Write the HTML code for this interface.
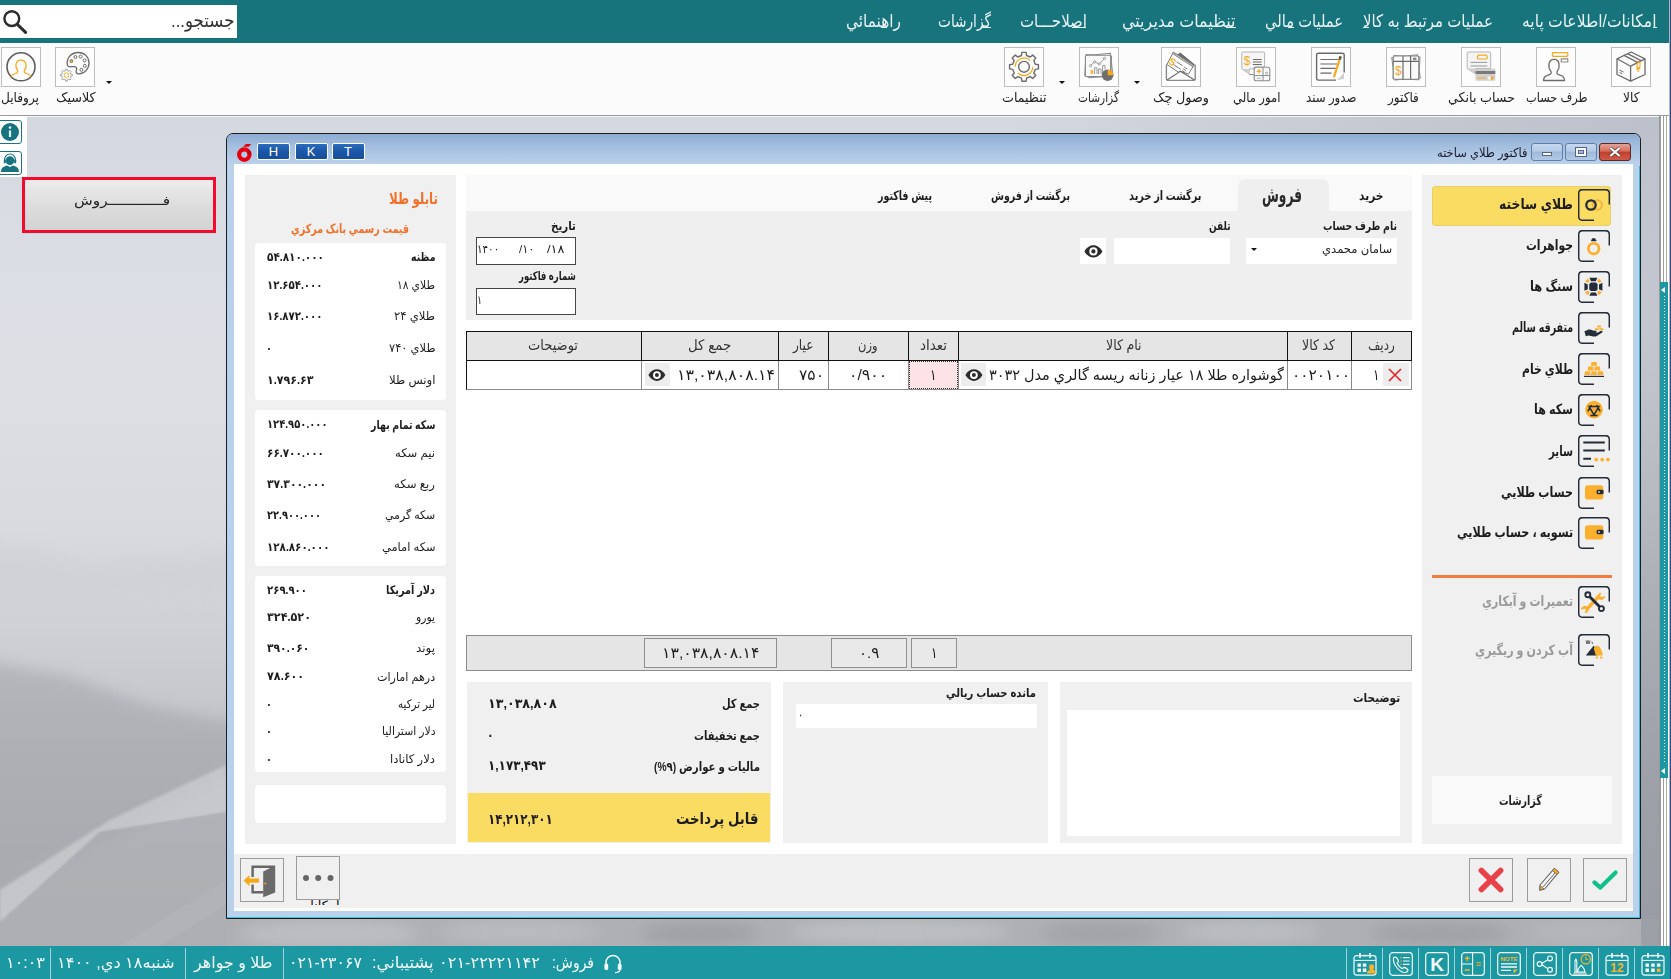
<!DOCTYPE html>
<html lang="fa"><head><meta charset="utf-8"><title>فاکتور طلاي ساخته</title>
<style>
*{box-sizing:border-box;margin:0;padding:0}
html,body{width:1671px;height:979px;overflow:hidden;background:#c9cdd5}
body{position:relative;font-family:"Liberation Sans","DejaVu Sans",sans-serif;color:#222}
.a{position:absolute}
.t{position:absolute;white-space:nowrap;direction:rtl;unicode-bidi:plaintext}
#bg{left:0;top:116px;width:1671px;height:830px}
#hdr{left:0;top:0;width:1669px;height:43px;background:#17737c}
#hdrR{left:1669px;top:0;width:1px;height:946px;background:#b2b4b8}
#hdrN{left:1670px;top:0;width:1px;height:979px;background:#2b4a8f}
#srch{left:0;top:5px;width:237px;height:33px;background:#fff}
#tb{left:0;top:43px;width:1669px;height:72px;background:#fbfbfb}
#tbl{left:0;top:115px;width:1669px;height:1px;background:#9a9a9a}
#tbw{left:0;top:116px;width:1669px;height:1px;background:#f6f6f6}
.ib{position:absolute;top:47px;width:40px;height:40px;border:1px solid #bdbdbd;background:#fdfdfd}
.ib svg{position:absolute;left:0;top:0}
.dd{position:absolute;width:0;height:0;border-left:3px solid transparent;border-right:3px solid transparent;border-top:3px solid #111}
#lstrip{left:0;top:116px;width:27px;height:61px;background:#fff}
#rstrip{left:1659px;top:116px;width:11px;height:830px;background:#fff}
#redbox{left:22px;top:177px;width:194px;height:56px;border:3.5px solid #f30a2d;background:linear-gradient(#ececec,#dcdcdc 55%,#d3d3d3)}
#stat{left:0;top:946px;width:1670px;height:33px;background:#1c98a3}
.ssep{position:absolute;top:948px;width:1px;height:31px;background:#9fd3d8}
/* window */
#win{left:226px;top:133px;width:1415px;height:786px;border:1px solid #1c1c1c;border-radius:7px 7px 0 0;background:#b9d1ea;overflow:hidden}
#wtitle{left:0;top:0;width:1413px;height:30px;background:linear-gradient(#8fadd3,#a9c3e2 45%,#bbd2eb)}
#wbody{left:7px;top:30px;width:1399px;height:747px;background:#fff}
#wcy{left:0;top:783px;width:1413px;height:1px;background:#3cc8e0}
.pn{position:absolute;background:#f0f0f0}
.card{position:absolute;left:255px;width:191px;background:#fff;border-radius:4px}
.wbtn{position:absolute;top:143px;height:18px;border:1px solid #5f7fa6;border-radius:3px}
.hkt{position:absolute;top:143px;width:33px;height:17px;border:1px solid #fff;border-radius:2px;background:linear-gradient(#2a6cbc,#1b57a6 50%,#164f9b);color:#fff;font:13px "Liberation Sans",sans-serif;text-align:center;line-height:15px}
.sb{position:absolute;left:1578px;width:32px;height:32px}
.cell{position:absolute;top:331px;height:59px;border-left:1px solid #111}
.bbtn{position:absolute;border:1px solid #9b9b9b;background:#f0f0f0}
.sumb{position:absolute;top:638px;height:30px;border:1px solid #8f8f8f;background:#e9e9e9}
</style></head>
<body>
<svg id="bg" class="a" width="1671" height="830" viewBox="0 116 1671 830" preserveAspectRatio="none">
<defs>
<linearGradient id="g1" x1="0" y1="0" x2="0" y2="1">
<stop offset="0" stop-color="#d3d7df"/><stop offset="0.14" stop-color="#dadde4"/><stop offset="0.34" stop-color="#dddee4"/><stop offset="0.5" stop-color="#d9dade"/><stop offset="0.57" stop-color="#d3d4d8"/><stop offset="0.66" stop-color="#cbcdd1"/><stop offset="0.78" stop-color="#bcbec2"/><stop offset="0.9" stop-color="#b4b6ba"/><stop offset="1" stop-color="#b0b2b6"/>
</linearGradient>
<linearGradient id="g2" x1="0" y1="0" x2="1" y2="0">
<stop offset="0" stop-color="#000" stop-opacity="0"/><stop offset="0.6" stop-color="#000" stop-opacity="0"/><stop offset="1" stop-color="#1a2340" stop-opacity=".13"/>
</linearGradient>
<linearGradient id="g3" x1="0" y1="0" x2="0" y2="1"><stop offset="0" stop-color="#9a9da5" stop-opacity="0"/><stop offset="0.55" stop-color="#9a9da5" stop-opacity=".55"/><stop offset="1" stop-color="#989ba3" stop-opacity=".8"/></linearGradient>
<filter id="b6" x="-30%" y="-60%" width="160%" height="220%"><feGaussianBlur stdDeviation="7"/></filter><filter id="b2" x="-20%" y="-20%" width="140%" height="140%"><feGaussianBlur stdDeviation="1.6"/></filter>
</defs>
<rect x="0" y="116" width="1671" height="830" fill="url(#g1)"/>
<rect x="0" y="116" width="1671" height="830" fill="url(#g2)"/>
<polygon points="-20,540 40,548 90,562 240,548 240,600 -20,610" fill="#d0d1d5" opacity=".6" filter="url(#b6)"/>
<polygon points="-20,660 70,676 150,706 240,724 240,772 -20,905" fill="#9fa1a7" opacity=".5" filter="url(#b6)"/>
<polygon points="226,765 226,812 100,832 0,922 0,890 110,820" fill="#cccdd0" opacity=".75" filter="url(#b2)"/>
<polygon points="0,922 100,832 226,812 226,946 0,946" fill="#a9abb0" opacity=".55"/>
<polygon points="120,946 226,880 226,905 160,946" fill="#b4b6ba" opacity=".6"/>
<rect x="226" y="919" width="1445" height="27" fill="#aeb0b4"/>
<g filter="url(#b6)" opacity=".8"><ellipse cx="330" cy="934" rx="90" ry="14" fill="#bfc1c4"/><ellipse cx="520" cy="932" rx="80" ry="12" fill="#bcbec1"/><ellipse cx="700" cy="934" rx="60" ry="12" fill="#9c9ea3"/><ellipse cx="900" cy="932" rx="110" ry="12" fill="#c0c2c5"/><ellipse cx="1100" cy="934" rx="60" ry="12" fill="#9fa1a6"/><ellipse cx="1250" cy="932" rx="70" ry="12" fill="#bdbfc2"/><ellipse cx="1440" cy="934" rx="70" ry="12" fill="#9d9fa4"/><ellipse cx="1580" cy="932" rx="50" ry="12" fill="#b6b8bb"/></g>
<rect x="1641" y="330" width="18" height="616" fill="url(#g3)"/>
</svg>
<div id="hdr" class="a"></div>
<div id="srch" class="a"></div>
<div class="a" style="left:1226px;top:27px;width:9.5px;height:1px;background:#e9f3f4"></div>
<div class="a" style="left:1072px;top:27px;width:13.5px;height:1px;background:#e9f3f4"></div>
<div class="a" style="left:981px;top:27px;width:10px;height:1px;background:#e9f3f4"></div>
<div class="a" style="left:881px;top:27px;width:6px;height:1px;background:#e9f3f4"></div>
<div class="a" style="left:1288px;top:27px;width:5.5px;height:1px;background:#e9f3f4"></div>
<div class="a" style="left:1363px;top:27px;width:6px;height:1px;background:#e9f3f4"></div>
<div class="a" style="left:1653px;top:27px;width:4px;height:1px;background:#e9f3f4"></div>
<div id="tb" class="a"></div><div id="tbl" class="a"></div><div id="tbw" class="a"></div>
<div id="lstrip" class="a"></div>
<div id="rstrip" class="a"></div>
<div class="a" style="left:1659px;top:116px;width:1.5px;height:830px;background:#9a9a9a"></div>
<div class="a" style="left:1663px;top:116px;width:1px;height:830px;background:#9c9c9c"></div>
<div class="a" style="left:1666px;top:116px;width:1px;height:830px;background:#a8a8a8"></div>
<div class="a" style="left:1660px;top:282px;width:8px;height:496px;background:#1c98a3"></div>
<div class="a" style="left:1664px;top:296px;width:1px;height:468px;background:repeating-linear-gradient(#fff 0 1px,transparent 1px 3px)"></div>
<div class="a" style="left:1661px;top:287px;width:0;height:0;border-top:3px solid transparent;border-bottom:3px solid transparent;border-right:4px solid #fff"></div>
<div class="a" style="left:1661px;top:768px;width:0;height:0;border-top:3px solid transparent;border-bottom:3px solid transparent;border-right:4px solid #fff"></div>
<div id="redbox" class="a"></div>
<div id="stat" class="a"></div>
<div class="ssep" style="left:50.0px"></div>
<div class="ssep" style="left:185.0px"></div>
<div class="ssep" style="left:283.0px"></div>
<div class="ssep" style="left:1346.0px"></div>
<div class="ssep" style="left:1382.0px"></div>
<div class="ssep" style="left:1418.0px"></div>
<div class="ssep" style="left:1454.0px"></div>
<div class="ssep" style="left:1490.0px"></div>
<div class="ssep" style="left:1526.0px"></div>
<div class="ssep" style="left:1562.0px"></div>
<div class="ssep" style="left:1598.0px"></div>
<div class="ssep" style="left:1634.0px"></div>
<div class="a" style="left:226px;top:133px;width:1415px;height:786px;border:1px solid #1c1c1c;border-radius:7px 7px 0 0;background:#b9d1ea"></div>
<div class="a" style="left:227px;top:134px;width:1413px;height:30px;border-radius:6px 6px 0 0;background:linear-gradient(#8dabd2,#a6c0e0 45%,#bad1ea)"></div>
<div class="a" style="left:234px;top:164px;width:1399px;height:747px;background:#fff"></div>
<div class="a" style="left:227px;top:917px;width:1413px;height:1px;background:#35c4de"></div>
<div class="a" style="left:1639px;top:166px;width:1px;height:752px;background:#3fb6d6"></div>
<div class="pn" style="left:245px;top:175px;width:211px;height:669px;"></div>
<div class="pn" style="left:466px;top:175px;width:945.5px;height:36px;background:#f9f9f9"></div>
<div class="pn" style="left:466px;top:211px;width:945.5px;height:109px;background:#efefef"></div>
<div class="pn" style="left:1238px;top:179px;width:90.5px;height:33px;background:#efefef;border-radius:8px 8px 0 0"></div>
<div class="pn" style="left:1422px;top:175px;width:200px;height:669px;"></div>
<div class="pn" style="left:467px;top:682px;width:303.5px;height:161px;"></div>
<div class="pn" style="left:468px;top:793px;width:302px;height:49px;background:#fbdc62"></div>
<div class="pn" style="left:783px;top:682px;width:265px;height:160.5px;"></div>
<div class="pn" style="left:1059.5px;top:682px;width:352.0px;height:161px;"></div>
<div class="pn" style="left:234px;top:854px;width:1399px;height:54px;"></div>
<div class="card" style="top:242.5px;height:157.0px"></div>
<div class="card" style="top:410px;height:156px"></div>
<div class="card" style="top:575.5px;height:196.5px"></div>
<div class="card" style="top:785px;height:37.5px"></div>
<div class="a" style="left:475.5px;top:237px;width:100.5px;height:27.5px;background:#fff;border:1px solid #444"></div>
<div class="a" style="left:475.5px;top:288px;width:100.5px;height:27px;background:#fff;border:1px solid #444"></div>
<div class="a" style="left:1245.5px;top:237.5px;width:151.5px;height:26.5px;background:#fff"></div>
<div class="dd" style="left:1251px;top:248px;border-left-width:3.5px;border-right-width:3.5px;border-top-width:3.5px"></div>
<div class="a" style="left:1114px;top:237.5px;width:116px;height:26.5px;background:#fff"></div>
<div class="a" style="left:1080px;top:238px;width:26px;height:26px;background:#fff"></div>
<div class="a" style="left:466px;top:331px;width:946px;height:59px;background:#fff;border:1px solid #8a8a8a;border-left-color:#111"></div>
<div class="a" style="left:466px;top:331px;width:946px;height:30px;background:#e5e5e5;border:1px solid #111"></div>
<div class="a" style="left:640.5px;top:331px;width:1.0px;height:30px;background:#111"></div>
<div class="a" style="left:640.5px;top:361px;width:1.0px;height:28px;background:#8a8a8a"></div>
<div class="a" style="left:778.0px;top:331px;width:1.0px;height:30px;background:#111"></div>
<div class="a" style="left:778.0px;top:361px;width:1.0px;height:28px;background:#8a8a8a"></div>
<div class="a" style="left:827.5px;top:331px;width:1.0px;height:30px;background:#111"></div>
<div class="a" style="left:827.5px;top:361px;width:1.0px;height:28px;background:#8a8a8a"></div>
<div class="a" style="left:907.5px;top:331px;width:1.0px;height:30px;background:#111"></div>
<div class="a" style="left:907.5px;top:361px;width:1.0px;height:28px;background:#8a8a8a"></div>
<div class="a" style="left:957.5px;top:331px;width:1.0px;height:30px;background:#111"></div>
<div class="a" style="left:957.5px;top:361px;width:1.0px;height:28px;background:#8a8a8a"></div>
<div class="a" style="left:1286.5px;top:331px;width:1.0px;height:30px;background:#111"></div>
<div class="a" style="left:1286.5px;top:361px;width:1.0px;height:28px;background:#8a8a8a"></div>
<div class="a" style="left:1350.5px;top:331px;width:1.0px;height:30px;background:#111"></div>
<div class="a" style="left:1350.5px;top:361px;width:1.0px;height:28px;background:#8a8a8a"></div>
<div class="a" style="left:908.5px;top:361px;width:49.5px;height:28px;background:#fde3e6;outline:1px dotted #333;outline-offset:-1px"></div>
<div class="a" style="left:645px;top:363px;width:25px;height:23px;background:#ededed"></div>
<div class="a" style="left:961px;top:363px;width:25px;height:23px;background:#ededed"></div>
<div class="a" style="left:1383px;top:363px;width:25.5px;height:23px;background:#ededed"></div>
<div class="a" style="left:466px;top:635px;width:946px;height:36px;background:#e5e5e5;border:1px solid #8c8c8c"></div>
<div class="a" style="left:644px;top:638px;width:133px;height:30px;border:1px solid #8f8f8f;background:#e9e9e9"></div>
<div class="a" style="left:830.5px;top:638px;width:76.5px;height:30px;border:1px solid #8f8f8f;background:#e9e9e9"></div>
<div class="a" style="left:911px;top:638px;width:46px;height:30px;border:1px solid #8f8f8f;background:#e9e9e9"></div>
<div class="a" style="left:796px;top:704px;width:240.5px;height:24px;background:#fff"></div>
<div class="a" style="left:1066.5px;top:710px;width:333.5px;height:126px;background:#fff"></div>
<div class="a" style="left:1432px;top:185.5px;width:179px;height:40.0px;background:#fbdc62;border-radius:3px;border:1px solid #e6cf6c"></div>
<div class="a" style="left:1432px;top:575px;width:180px;height:3px;background:#f47a3e"></div>
<div class="a" style="left:1432px;top:776px;width:180px;height:48px;background:#f9f9f9"></div>
<div class="bbtn" style="left:240px;top:858px;width:44px;height:44px;"></div>
<div class="bbtn" style="left:296px;top:856px;width:44px;height:44px;"></div>
<div class="bbtn" style="left:1469px;top:858px;width:44px;height:44px;"></div>
<div class="bbtn" style="left:1527px;top:858px;width:44px;height:44px;"></div>
<div class="bbtn" style="left:1583px;top:858px;width:44px;height:44px;"></div>
<div id="hdrR" class="a"></div><div id="hdrN" class="a"></div>
<div class="ib" style="left:1611px"></div>
<svg class="a" style="left:1611px;top:47px" width="40" height="40" viewBox="0 0 40 40" ><g fill="none" stroke="#6b6b6b" stroke-width="1.3" stroke-linejoin="round"><path d="M20,5 L34,11.8 L34,27.5 L19.6,34.2 L6,27.5 L6,11.8 Z"/><path d="M6,11.8 L19.6,19.2 L34,11.8 M19.6,19.2 V34.2"/><path d="M13,8.4 L27,15.6 M16.5,6.7 L30.5,13.8"/><path d="M8.5,23 l4,2 M8.5,25.5 l2.5,1.2" stroke-width="1"/></g><path d="M26,16.5 l3,-1.5 v5 l-3,1.5z M25.8,23 l3.4,-1.7 M26.6,24.6 l1.8,-.9" fill="none" stroke="#f7a81b" stroke-width="1.1"/></svg>
<div class="ib" style="left:1536px"></div>
<svg class="a" style="left:1536px;top:47px" width="40" height="40" viewBox="0 0 40 40" ><path d="M7.5,33.5 c0,-4 3,-5 6.5,-6.2 c1.5,-.6 1.6,-2.3 .6,-3.5 c-1.6,-2 -2,-4.5 -1.6,-7 c.5,-3 2.6,-4.5 5,-4.5 c2.5,0 4.6,1.6 5,4.5 c.4,2.5 0,5 -1.5,7 c-1,1.2 -.9,2.9 .6,3.5 c3.5,1.2 6.4,2.2 6.4,6.2z" fill="none" stroke="#6b6b6b" stroke-width="1.3" stroke-linejoin="round"/><rect x="16.4" y="5.6" width="15.4" height="3.8" rx=".8" fill="none" stroke="#f7a81b" stroke-width="1.3"/><rect x="25.2" y="11.8" width="6.6" height="3.2" rx=".6" fill="none" stroke="#8a8a8a" stroke-width="1.2"/></svg>
<div class="ib" style="left:1461px"></div>
<svg class="a" style="left:1461px;top:47px" width="40" height="40" viewBox="0 0 40 40" ><path d="M6.2,6 q0,-1 1,-1 h21.5 q1,0 1,1 v15.5 h-15 l0,5.5 l-8.5,-5.5z" fill="#f4f4f4" stroke="#b5b5b5" stroke-width="1"/><path d="M6.2,21.5 h8.5 v5.5z" fill="#cfcfcf"/><rect x="16.4" y="8.2" width="9.8" height="3.8" rx="1.6" fill="none" stroke="#f7a81b" stroke-width="1.2"/><path d="M9.5,15.4 h16.8 M9.5,19 h16.8" stroke="#9a9a9a" stroke-width="1"/><rect x="14.5" y="21.8" width="19.8" height="12" rx="1" fill="#d0d0d0"/><rect x="14.5" y="24" width="19.8" height="3" fill="#7a7a7a"/><path d="M16.5,31 h2 M19.5,31 h2 M22.5,31 h2" stroke="#f7a81b" stroke-width="1.6"/><circle cx="30.8" cy="31" r="1.7" fill="#f7a81b"/><circle cx="28.3" cy="31" r="1.7" fill="#f3f3f3"/></svg>
<div class="ib" style="left:1386px"></div>
<svg class="a" style="left:1386px;top:47px" width="40" height="40" viewBox="0 0 40 40" ><g fill="#fafafa" stroke="#8a8a8a" stroke-width="1.1" stroke-linejoin="round"><path d="M5.8,10.5 L31.5,7.8 L34.2,31 L8.5,33z"/><path d="M8,8.6 L34,10 L32.8,32.6 L7,31.6z"/><rect x="7.3" y="9" width="25.4" height="23.4" rx="1.6"/></g><path d="M7.3,14.4 h25.4 M17,9 v23.4 M24.6,9 v23.4" stroke="#6b6b6b" stroke-width="1.2"/><rect x="27" y="10.6" width="3.4" height="2.6" fill="#8a8a8a"/><text x="12.4" y="27.6" font-family="Liberation Sans,sans-serif" font-size="12" font-weight="400" fill="#f7a81b" text-anchor="middle">$</text></svg>
<div class="ib" style="left:1311px"></div>
<svg class="a" style="left:1311px;top:47px" width="40" height="40" viewBox="0 0 40 40" ><path d="M33,26 v6 l-7,1z" fill="#cfcfcf"/><path d="M33.2,25.5 V8 q0,-1.8 -1.8,-1.8 H7.4 q-1.8,0 -1.8,1.8 V31.3 q0,1.8 1.8,1.8 H25" fill="none" stroke="#6b6b6b" stroke-width="1.4"/><path d="M9.4,12.5 h18 M9.4,17 h16.8 M9.4,21.4 h15.4 M9.4,26.2 h11" stroke="#6b6b6b" stroke-width="1.2"/><path d="M29.3,10.2 L23.2,29.5" stroke="#f7a81b" stroke-width="2.2" stroke-linecap="round"/><path d="M29.6,9.4 l-1,3.2" stroke="#555" stroke-width="2.4"/></svg>
<div class="ib" style="left:1236px"></div>
<svg class="a" style="left:1236px;top:47px" width="40" height="40" viewBox="0 0 40 40" ><path d="M5.8,6 q0,-1 1,-1 h20.8 q1,0 1,1 v14 h-10.5 v1.9 h-5 l0,5 l-7.3,-5z" fill="#f6f6f6" stroke="#b5b5b5" stroke-width="1"/><path d="M5.8,21.9 h7.3 v5z" fill="#cfcfcf"/><text x="11" y="17.6" font-family="Liberation Sans,sans-serif" font-size="12" font-weight="400" fill="#f7a81b" text-anchor="middle">$</text><path d="M16.9,12.5 h8.8 M16.9,15 h8.8 M16.9,17.5 h8.8" stroke="#6b6b6b" stroke-width="1.2"/><rect x="18.2" y="20.2" width="15.6" height="13.6" rx="2" fill="#fbfbfb" stroke="#8a8a8a" stroke-width="1.1"/><path d="M27,20.2 v13.6 M18.2,28.6 h15.6 M13,27.6 h5" stroke="#8a8a8a" stroke-width="1"/><path d="M20.8,24.3 h4.4 M23,22.1 v4.4" stroke="#f7a81b" stroke-width="1.2"/><path d="M29,25.3 h3 M29,27 h3 M21,31.3 h3.6" stroke="#aaa" stroke-width="1"/></svg>
<div class="ib" style="left:1161px"></div>
<svg class="a" style="left:1161px;top:47px" width="40" height="40" viewBox="0 0 40 40" ><path d="M19.3,5.4 L33.8,17.6 L31.2,19.4 L16.5,7.6z" fill="#6e6e6e"/><path d="M12.4,5.2 L32.8,18.4 L27.4,27.2 L19.3,24.2 L17.4,25.2 L5.9,17.4z" fill="#fff" stroke="#777" stroke-width="1" stroke-linejoin="round"/><path d="M12.4,5.2 L32.8,18.4 L31.9,19.9 L11.5,6.7z" fill="#bdbdbd" stroke="#777" stroke-width=".7"/><text transform="translate(11.6,14.8) rotate(32)" x="0" y="3.6" font-family="Liberation Sans,sans-serif" font-size="10" font-weight="700" fill="#f7a81b" text-anchor="middle">S</text><path d="M15.6,14.8 L21.4,18.6 M13.2,18.1 L19.5,22.1 M23.2,20 l3,2 M22.2,21.8 l3,2 M21.2,23.6 l3,2" stroke="#777" stroke-width="1"/><path d="M5.4,17.6 V32 Q5.4,33.4 6.8,33.4 H32.8 Q34.2,33.4 34.2,32 V17.6" fill="none" stroke="#8a8a8a" stroke-width="1.4"/><path d="M6,33 L19.3,24.4 L33.6,33" fill="none" stroke="#666" stroke-width="1.1"/></svg>
<div class="ib" style="left:1079px"></div>
<svg class="a" style="left:1079px;top:47px" width="40" height="40" viewBox="0 0 40 40" ><g fill="#fafafa" stroke="#8a8a8a" stroke-width="1.1" stroke-linejoin="round"><path d="M8,8.5 L31.5,6.2 L33.8,28.6 L10,30.8z"/><path d="M7,7.6 L32.6,9.4 L31.4,30 L5.8,28.6z"/><rect x="6.4" y="8.2" width="25.2" height="21.4" rx="1.4"/></g><path d="M11.5,27 v-4 h2.6 v4" fill="#f7a81b" opacity=".8"/><path d="M15.6,27 v-6.2 h2.4 v6.2 M19.6,27 v-5 h2.4 v5 M23.6,27 v-8.4 h2.4 v4" fill="none" stroke="#9a9a9a" stroke-width="1"/><path d="M11.5,18.6 L15.6,14.8 L20.2,17 L25.6,11.4" fill="none" stroke="#999" stroke-width="1"/><circle cx="11.5" cy="18.6" r="1.1" fill="#fff" stroke="#888" stroke-width=".8"/><circle cx="15.6" cy="14.8" r="1.1" fill="#fff" stroke="#888" stroke-width=".8"/><circle cx="20.2" cy="17" r="1.1" fill="#fff" stroke="#888" stroke-width=".8"/><circle cx="25.6" cy="11.4" r="1.1" fill="#fff" stroke="#888" stroke-width=".8"/><circle cx="28.6" cy="28.2" r="5.8" fill="#6e6e6e"/><path d="M28.6,28.2 V22.4 A5.8,5.8 0 0 1 34.4,28.2z" fill="#f7a81b"/></svg>
<div class="ib" style="left:1004px"></div>
<svg class="a" style="left:1004px;top:47px" width="40" height="40" viewBox="0 0 40 40" ><path d="M31.32,17.28 L34.44,17.67 L34.44,21.93 L31.32,22.32 L29.79,26.02 L31.72,28.51 L28.71,31.52 L26.22,29.59 L22.52,31.12 L22.13,34.24 L17.87,34.24 L17.48,31.12 L13.78,29.59 L11.29,31.52 L8.28,28.51 L10.21,26.02 L8.68,22.32 L5.56,21.93 L5.56,17.67 L8.68,17.28 L10.21,13.58 L8.28,11.09 L11.29,8.08 L13.78,10.01 L17.48,8.48 L17.87,5.36 L22.13,5.36 L22.52,8.48 L26.22,10.01 L28.71,8.08 L31.72,11.09 L29.79,13.58Z" fill="none" stroke="#6b6b6b" stroke-width="1.4" stroke-linejoin="round"/><circle cx="20" cy="19.8" r="5.4" fill="none" stroke="#6b6b6b" stroke-width="1.4"/><path d="M11.2,19.8 a8.8,8.8 0 0 1 15,-6.2 M28.8,19.8 a8.8,8.8 0 0 1 -15,6.2" fill="none" stroke="#f7a81b" stroke-width="1.2"/></svg>
<div class="ib" style="left:55px"></div>
<svg class="a" style="left:55px;top:47px" width="40" height="40" viewBox="0 0 40 40" ><path d="M12.5,18.5 c-1.5,-6 2.5,-12.5 10,-13 c7,-.4 11.5,4.5 11.5,10.5 c0,6 -4.5,10.8 -10,10.8 c-3,0 -3.4,-2 -2.6,-3.6 c.8,-1.6 0,-3.4 -2,-3.6 c-2.4,-.2 -6.2,1.2 -6.9,-1.1z" fill="none" stroke="#6b6b6b" stroke-width="1.3"/><circle cx="16.4" cy="14" r="1.5" fill="#f7a81b" stroke="#6b6b6b" stroke-width=".8"/><circle cx="20.4" cy="10" r="1.5" fill="none" stroke="#6b6b6b" stroke-width="1"/><circle cx="25.6" cy="9.6" r="1.5" fill="none" stroke="#6b6b6b" stroke-width="1"/><circle cx="29.6" cy="13.4" r="1.5" fill="none" stroke="#6b6b6b" stroke-width="1"/><circle cx="29.8" cy="18.8" r="1.5" fill="none" stroke="#6b6b6b" stroke-width="1"/><circle cx="26.4" cy="22.8" r="1.5" fill="none" stroke="#6b6b6b" stroke-width="1"/><path d="M15.90,27.23 L17.34,27.35 L17.34,29.05 L15.90,29.17 L15.26,30.70 L16.20,31.80 L15.00,33.00 L13.90,32.06 L12.37,32.70 L12.25,34.14 L10.55,34.14 L10.43,32.70 L8.90,32.06 L7.80,33.00 L6.60,31.80 L7.54,30.70 L6.90,29.17 L5.46,29.05 L5.46,27.35 L6.90,27.23 L7.54,25.70 L6.60,24.60 L7.80,23.40 L8.90,24.34 L10.43,23.70 L10.55,22.26 L12.25,22.26 L12.37,23.70 L13.90,24.34 L15.00,23.40 L16.20,24.60 L15.26,25.70Z" fill="none" stroke="#999" stroke-width=".9"/><circle cx="11.4" cy="28.2" r="2.4" fill="none" stroke="#f7a81b" stroke-width=".9"/></svg>
<div class="ib" style="left:1px"></div>
<svg class="a" style="left:1px;top:47px" width="40" height="40" viewBox="0 0 40 40" ><circle cx="20" cy="19.8" r="14" fill="none" stroke="#5e5e5e" stroke-width="1.6"/><path d="M10,29.6 c1,-2.4 4,-2.8 6,-3.8 c1,-.6 1,-1.8 .3,-2.8 c-1.2,-1.6 -1.6,-3.6 -1.3,-5.6 c.4,-2.6 2.4,-4.2 5,-4.2 c2.6,0 4.6,1.6 5,4.2 c.3,2 -.1,4 -1.3,5.6 c-.7,1 -.7,2.2 .3,2.8 c2,1 5,1.4 6,3.8" fill="none" stroke="#f7a81b" stroke-width="1.3"/></svg>
<div class="dd" style="left:1133.5px;top:81px"></div>
<div class="dd" style="left:1058.5px;top:81px"></div>
<div class="dd" style="left:106px;top:81px"></div>
<svg class="a" style="left:0px;top:6px" width="32" height="32" viewBox="0 0 32 32" ><circle cx="11.8" cy="12.6" r="7.4" fill="none" stroke="#2b2b2b" stroke-width="2.4"/><path d="M17.2,18.2 L25.6,26.4" stroke="#2b2b2b" stroke-width="3" stroke-linecap="round"/></svg>
<svg class="a" style="left:1578px;top:189px" width="32" height="32" viewBox="0 0 32 32" ><path d="M31.3,15.5 V4.6 Q31.3,0.7 27.4,0.7 H4.6 Q0.7,0.7 0.7,4.6 V27.4 Q0.7,31.3 4.6,31.3 H16" fill="none" stroke="#232c38" stroke-width="1.5"/><circle cx="19.2" cy="16" r="4.7" fill="none" stroke="#f0b545" stroke-width="2"/><circle cx="13" cy="16" r="4.7" fill="none" stroke="#232c38" stroke-width="2.3"/></svg>
<svg class="a" style="left:1578px;top:230px" width="32" height="32" viewBox="0 0 32 32" ><path d="M31.3,15.5 V4.6 Q31.3,0.7 27.4,0.7 H4.6 Q0.7,0.7 0.7,4.6 V27.4 Q0.7,31.3 4.6,31.3 H16" fill="none" stroke="#232c38" stroke-width="1.5"/><circle cx="15.7" cy="18.6" r="5.3" fill="none" stroke="#fbb02d" stroke-width="2.8"/><path d="M13.2,10.2 l1.1,-1.9 h2.8 l1.1,1.9 v1 h-5z" fill="#232c38"/></svg>
<svg class="a" style="left:1578px;top:271px" width="32" height="32" viewBox="0 0 32 32" ><path d="M31.3,15.5 V4.6 Q31.3,0.7 27.4,0.7 H4.6 Q0.7,0.7 0.7,4.6 V27.4 Q0.7,31.3 4.6,31.3 H16" fill="none" stroke="#232c38" stroke-width="1.5"/><path d="M12.8,11.6 L18.0,11.6 L19.6,13.2 L19.6,18.4 L18.0,20.0 L12.8,20.0 L11.2,18.4 L11.2,13.2z" fill="#232c38"/><path d="M11.4,6.8 L19.4,6.8 L17.8,10.2 L13.0,10.2z" fill="#232c38"/><path d="M6.4,11.8 L6.4,19.8 L9.8,18.2 L9.8,13.4z" fill="#232c38"/><path d="M11.4,24.8 L19.4,24.8 L17.8,21.4 L13.0,21.4z" fill="#232c38"/><path d="M24.4,11.8 L24.4,19.8 L21.0,18.2 L21.0,13.4z" fill="#232c38"/><path d="M10.0,7.4 L7.0,10.4 L9.8,12.0 L11.6,10.2z" fill="#fbb02d"/><path d="M10.0,24.2 L7.0,21.2 L9.8,19.6 L11.6,21.4z" fill="#fbb02d"/><path d="M20.8,7.4 L23.8,10.4 L21.0,12.0 L19.2,10.2z" fill="#fbb02d"/><path d="M20.8,24.2 L23.8,21.2 L21.0,19.6 L19.2,21.4z" fill="#fbb02d"/></svg>
<svg class="a" style="left:1578px;top:312px" width="32" height="32" viewBox="0 0 32 32" ><path d="M31.3,15.5 V4.6 Q31.3,0.7 27.4,0.7 H4.6 Q0.7,0.7 0.7,4.6 V27.4 Q0.7,31.3 4.6,31.3 H16" fill="none" stroke="#232c38" stroke-width="1.5"/><path d="M6.4,19.2 l4.4,-1.6 c1.4,-.4 2.6,.2 4,.8 l3,.4 c1,.2 1,1.6 0,1.8 l-4,.2 l6,-.2 l3.4,-1.8 c1.2,-.4 1.8,.8 1,1.6 l-5.4,3.6 c-1.2,.6 -2.4,.6 -3.600,.4 l-4.6,-1 l-2.800,.8z" fill="#232c38"/><path d="M17,16.200 h3.800 v2 h-3.800z M21.400,16.200 h3.800 v2 h-3.800z M19.200,13.400 h3.800 v2 h-3.800z" fill="#fbb02d"/></svg>
<svg class="a" style="left:1578px;top:353px" width="32" height="32" viewBox="0 0 32 32" ><path d="M31.3,15.5 V4.6 Q31.3,0.7 27.4,0.7 H4.6 Q0.7,0.7 0.7,4.6 V27.4 Q0.7,31.3 4.6,31.3 H16" fill="none" stroke="#232c38" stroke-width="1.5"/><path d="M13.600,9 h4.800 l.8,3.800 h-6.400z M10.200,13.600 h5 l.6,3.800 h-6.200z M16.800,13.600 h5 l.6,3.800 h-6.200z M7,18.200 h5 l.6,3.800 h-6.200z M13.500,18.200 h5 l.6,3.800 h-6.200z M20,18.200 h5 l.6,3.800 h-6.200z" fill="#fbb02d"/><path d="M6,23.400 h20" stroke="#232c38" stroke-width="1.2"/></svg>
<svg class="a" style="left:1578px;top:394px" width="32" height="32" viewBox="0 0 32 32" ><path d="M31.3,15.5 V4.6 Q31.3,0.7 27.4,0.7 H4.6 Q0.7,0.7 0.7,4.6 V27.4 Q0.7,31.3 4.6,31.3 H16" fill="none" stroke="#232c38" stroke-width="1.5"/><circle cx="16" cy="15.6" r="8.8" fill="#fbb02d"/><path d="M11,12.4 h10 l-5,8.400z M9.800,17.400 l3.600,-6.400 M22.200,17.400 l-3.600,-6.400 M12.400,21.400 h7.200" fill="none" stroke="#232c38" stroke-width="1.500"/></svg>
<svg class="a" style="left:1578px;top:435px" width="32" height="32" viewBox="0 0 32 32" ><path d="M31.3,15.5 V4.6 Q31.3,0.7 27.4,0.7 H4.6 Q0.7,0.7 0.7,4.6 V27.4 Q0.7,31.3 4.6,31.3 H16" fill="none" stroke="#232c38" stroke-width="1.5"/><path d="M5.300,7.600 h21.500 M5.300,15.600 h21.500 M5.300,23.700 h7.700" stroke="#232c38" stroke-width="2"/><circle cx="18.200" cy="24.600" r="1.900" fill="#fbb02d"/><circle cx="24.200" cy="24.600" r="1.900" fill="#fbb02d"/><circle cx="30" cy="24.600" r="1.900" fill="#fbb02d"/></svg>
<svg class="a" style="left:1578px;top:476.5px" width="32" height="32" viewBox="0 0 32 32" ><path d="M31.3,15.5 V4.6 Q31.3,0.7 27.4,0.7 H4.6 Q0.7,0.7 0.7,4.6 V27.4 Q0.7,31.3 4.6,31.3 H16" fill="none" stroke="#232c38" stroke-width="1.5"/><rect x="7" y="8.200" width="18.300" height="14.400" rx="2.800" fill="#fbb02d"/><rect x="18.600" y="12.800" width="7" height="4.400" rx="1.400" fill="#232c38"/><circle cx="21" cy="15" r=".9" fill="#ddd"/></svg>
<svg class="a" style="left:1578px;top:517px" width="32" height="32" viewBox="0 0 32 32" ><path d="M31.3,15.5 V4.6 Q31.3,0.7 27.4,0.7 H4.6 Q0.7,0.7 0.7,4.6 V27.4 Q0.7,31.3 4.6,31.3 H16" fill="none" stroke="#232c38" stroke-width="1.5"/><rect x="7" y="8.200" width="18.300" height="14.400" rx="2.800" fill="#fbb02d"/><rect x="18.600" y="12.800" width="7" height="4.400" rx="1.400" fill="#232c38"/><circle cx="21" cy="15" r=".9" fill="#ddd"/></svg>
<svg class="a" style="left:1578px;top:586px" width="32" height="32" viewBox="0 0 32 32" ><path d="M31.3,15.5 V4.6 Q31.3,0.7 27.4,0.7 H4.6 Q0.7,0.7 0.7,4.6 V27.4 Q0.7,31.3 4.6,31.3 H16" fill="none" stroke="#232c38" stroke-width="1.5"/><path d="M9,23.200 L21,10" stroke="#fbb02d" stroke-width="3.400"/><path d="M19.400,9.400 l2.400,-3 l1.600,.8 l-1.400,2.600 l1.600,1.400 l2.800,-1.200 l.8,1.600 l-3.200,2.400 l-3,-.6z M10.600,24.400 l-2.400,3 l-1.600,-.8 l1.400,-2.600 l-1.600,-1.400 l-2.800,1.200 l-.800,-1.600 l3.200,-2.400 l3,.600z" fill="#fbb02d"/><path d="M11.800,10.800 L21.400,20.600" stroke="#232c38" stroke-width="2.800"/><circle cx="9.800" cy="8.800" r="2.500" fill="#f0f0f0" stroke="#232c38" stroke-width="1.900"/><circle cx="23.400" cy="22.600" r="2.500" fill="#f0f0f0" stroke="#232c38" stroke-width="1.900"/></svg>
<svg class="a" style="left:1578px;top:634px" width="32" height="32" viewBox="0 0 32 32" ><path d="M31.3,15.5 V4.6 Q31.3,0.7 27.4,0.7 H4.6 Q0.7,0.7 0.7,4.6 V27.4 Q0.7,31.3 4.6,31.3 H16" fill="none" stroke="#232c38" stroke-width="1.5"/><path d="M7.800,21.400 L15.600,11.700 L18.400,15 L19.600,21.400z" fill="#232c38"/><path d="M15.800,14.600 c1.400,-3.600 4.400,-3.800 6.600,-.4 c1.400,2.200 2.400,5.200 2.200,7.200 h-6.800z" fill="#fbb02d"/><path d="M17.800,22.400 h2 v2.200 h-2z M22.200,22.400 h2 v2.200 h-2z" fill="#fbb02d"/><path d="M8,6.400 l1,3.600 l1,-3.600 l1,3.600 l1,-3.600 M13.200,8.600 c.8,-1 2,-.2 1.200,1.400" fill="none" stroke="#444" stroke-width=".8"/></svg>
<svg class="a" style="left:1352.5px;top:952px" width="24" height="24" viewBox="0 0 24 24" ><rect x="1" y="3.600" width="22" height="19.600" rx="2.600" fill="none" stroke="#f4fbfb" stroke-width="1.200"/><path d="M1,8.400 h22" stroke="#f4fbfb" stroke-width="1"/><path d="M7,1 v5 M17,1 v5" stroke="#f4fbfb" stroke-width="1.600"/><path d="M10.500,3.600 h3" stroke="#f4fbfb" stroke-width="1.600"/><path d="M4.500,11.500 h3.500 v3.300 h-3.500z M9.800,11.500 h3.500 v3.300 h-3.500z M4.500,16.600 h3.500 v3.300 h-3.500z M9.800,16.600 h3.500 v3.300 h-3.500z" fill="#f4fbfb"/><path d="M14,21.600 c0,-3 2,-3 3,-3.800 c-1.600,-2 -1.200,-5.600 1.600,-5.600 c2.800,0 3.200,3.600 1.600,5.600 c1,.8 3,.8 3,3.800z" fill="#f7b32b"/></svg>
<svg class="a" style="left:1388.5px;top:952px" width="24" height="24" viewBox="0 0 24 24" ><rect x=".7" y=".7" width="22.600" height="22.600" rx="3" fill="none" stroke="#f4fbfb" stroke-width="1.200"/><path d="M4.600,5.600 c-1,3 1,8 4,11 c3,3 6,4.600 8.600,3.600 c1.400,-.6 2,-2 1.600,-2.800 l-3,-2 c-1,-.4 -1.600,.8 -2.400,1.200 c-2,-.6 -4.600,-3.400 -5.200,-5.600 c.6,-.8 1.600,-1.400 1.200,-2.400 l-1.800,-3 c-1,-.8 -2.400,-.4 -3,0z" fill="none" stroke="#f4fbfb" stroke-width="1.200"/><path d="M14,5.600 h6.500 M14,9 h6.500 M14,12.400 h6.500" stroke="#f4fbfb" stroke-width="1.100"/><path d="M11.400,5.600 h1.400 M11.400,9 h1.400 M11.400,12.400 h1.400" stroke="#f7b32b" stroke-width="1.200"/></svg>
<svg class="a" style="left:1424.5px;top:952px" width="24" height="24" viewBox="0 0 24 24" ><rect x=".7" y=".7" width="22.600" height="22.600" rx="3" fill="none" stroke="#f4fbfb" stroke-width="1.200"/><text x="12" y="19.200" font-family="Liberation Sans,sans-serif" font-size="19" font-weight="700" fill="#f4fbfb" text-anchor="middle">K</text></svg>
<svg class="a" style="left:1460.5px;top:952px" width="24" height="24" viewBox="0 0 24 24" ><rect x=".7" y=".7" width="22.600" height="22.600" rx="3" fill="none" stroke="#f4fbfb" stroke-width="1.200"/><path d="M11.600,.7 v22.600 M.7,12 h10.900" stroke="#f4fbfb" stroke-width="1.100"/><path d="M3.800,6.400 h5 M6.300,3.900 v5 M3.800,18 h5" stroke="#f7b32b" stroke-width="1.300"/><path d="M15.400,10.800 h4.500 M15.400,13.200 h4.500" stroke="#f7b32b" stroke-width="1.100"/></svg>
<svg class="a" style="left:1496.5px;top:952px" width="24" height="24" viewBox="0 0 24 24" ><rect x=".7" y=".7" width="22.600" height="22.600" rx="3" fill="none" stroke="#f4fbfb" stroke-width="1.200"/><text x="12" y="8.600" font-family="Liberation Sans,sans-serif" font-size="6.200" font-weight="700" fill="#f7b32b" text-anchor="middle">NOTE</text><path d="M4,11.800 h16 M4,15 h16 M4,18.400 h10" stroke="#f4fbfb" stroke-width="1.300"/><path d="M16.500,17.400 h4.500 l-4.500,4z" fill="#f7b32b"/></svg>
<svg class="a" style="left:1532.5px;top:952px" width="24" height="24" viewBox="0 0 24 24" ><rect x=".7" y=".7" width="22.600" height="22.600" rx="3" fill="none" stroke="#f4fbfb" stroke-width="1.200"/><path d="M8,12 L16,7 M8,12 L16,17.400" stroke="#f4fbfb" stroke-width="1.200"/><circle cx="6.600" cy="12" r="2.400" fill="#1c98a3" stroke="#f4fbfb" stroke-width="1.200"/><circle cx="17" cy="6.400" r="2.400" fill="#1c98a3" stroke="#f4fbfb" stroke-width="1.200"/><circle cx="17" cy="17.800" r="2.400" fill="#1c98a3" stroke="#f4fbfb" stroke-width="1.200"/></svg>
<svg class="a" style="left:1568.5px;top:952px" width="24" height="24" viewBox="0 0 24 24" ><rect x=".7" y=".7" width="22.600" height="22.600" rx="3" fill="none" stroke="#f4fbfb" stroke-width="1.200"/><circle cx="16.800" cy="7.200" r="4.600" fill="none" stroke="#f7b32b" stroke-width="1.200"/><path d="M16.800,4.600 v2.800 h2.200" fill="none" stroke="#f7b32b" stroke-width="1"/><path d="M6,20 v-11 l.9,-2 l.9,2 v11 M8.600,20 c0,-4 2,-4.600 3.600,-6.600 c1.600,2 3.600,2.600 3.600,6.600z M4,22 h14 M5,20.200 h12" fill="none" stroke="#f4fbfb" stroke-width="1.100"/></svg>
<svg class="a" style="left:1604.5px;top:952px" width="24" height="24" viewBox="0 0 24 24" ><rect x="1" y="3.600" width="22" height="19.600" rx="2.600" fill="none" stroke="#f4fbfb" stroke-width="1.200"/><path d="M1,8.400 h22" stroke="#f4fbfb" stroke-width="1"/><path d="M7,1 v5 M17,1 v5" stroke="#f4fbfb" stroke-width="1.600"/><path d="M10.500,3.600 h3" stroke="#f4fbfb" stroke-width="1.600"/><text x="12" y="20.400" font-family="Liberation Sans,sans-serif" font-size="12" font-weight="700" fill="#f7b32b" text-anchor="middle">12</text></svg>
<svg class="a" style="left:1640.5px;top:952px" width="24" height="24" viewBox="0 0 24 24" ><rect x="1" y="3.600" width="22" height="19.600" rx="2.600" fill="none" stroke="#f4fbfb" stroke-width="1.200"/><path d="M1,8.400 h22" stroke="#f4fbfb" stroke-width="1"/><path d="M7,1 v5 M17,1 v5" stroke="#f4fbfb" stroke-width="1.600"/><path d="M10.500,3.600 h3" stroke="#f4fbfb" stroke-width="1.600"/><path d="M4.500,11.500 h3.500 v3.300 h-3.500z M10.200,11.500 h3.500 v3.300 h-3.500z M15.900,11.500 h3.500 v3.300 h-3.500z M4.500,16.600 h3.500 v3.300 h-3.500z M10.200,16.600 h3.500 v3.300 h-3.500z" fill="#f4fbfb"/><path d="M15.900,16.600 h3.500 v3.300 h-3.500z" fill="#f7b32b"/></svg>
<svg class="a" style="left:602px;top:952px" width="22" height="22" viewBox="0 0 22 22" ><path d="M4,13 v-2.500 a7,7 0 0 1 14,0 v2.500" fill="none" stroke="#f4fbfb" stroke-width="1.500"/><rect x="2.400" y="11.600" width="3.800" height="6.400" rx="1.600" fill="#f4fbfb"/><rect x="15.800" y="11.600" width="3.800" height="6.400" rx="1.600" fill="#f4fbfb"/><path d="M18,17.600 c0,2.400 -2,3 -5,3" fill="none" stroke="#f4fbfb" stroke-width="1.200"/></svg>
<div class="a" style="left:-3px;top:120px;width:25px;height:24px;border:1.600px solid #17737f;border-radius:3px;background:#fff"></div>
<svg class="a" style="left:0px;top:122px" width="20" height="20" viewBox="0 0 20 20" ><circle cx="10" cy="10" r="9" fill="#17737f"/><rect x="8.900" y="8.400" width="2.200" height="6.600" fill="#e6f1f2"/><circle cx="10" cy="5.600" r="1.300" fill="#e6f1f2"/></svg>
<div class="a" style="left:-3px;top:151px;width:25px;height:24px;border:1.600px solid #17737f;border-radius:3px;background:#fff"></div>
<svg class="a" style="left:0px;top:153px" width="20" height="20" viewBox="0 0 20 20" ><path d="M1,19 c0,-5 3.400,-5.600 6,-6.600 l3,1.600 l3,-1.600 c2.600,1 6,1.600 6,6.600z" fill="#17737f"/><circle cx="10" cy="7.600" r="4.400" fill="#17737f"/><path d="M4.600,8.400 v-2 a5.400,5.400 0 0 1 10.800,0 v2" fill="none" stroke="#17737f" stroke-width="1.200"/><rect x="3.800" y="6.400" width="2" height="4" rx=".8" fill="#17737f"/><rect x="14.200" y="6.400" width="2" height="4" rx=".8" fill="#17737f"/></svg>
<svg class="a" style="left:234px;top:140px" width="24" height="24" viewBox="0 0 24 24" ><circle cx="10.3" cy="14.6" r="5.2" fill="none" stroke="#e6000e" stroke-width="4.2"/><path d="M12,4 h5.2 l-2.4,2.8 h-5.8z" fill="#e6000e"/><path d="M14.2,11 a5.200,5.200 0 0 1 1.200,3.400" fill="none" stroke="#a8000a" stroke-width="4" opacity=".55"/></svg>
<div class="hkt" style="left:257px">H</div>
<div class="hkt" style="left:294.5px">K</div>
<div class="hkt" style="left:331.5px">T</div>
<div class="wbtn" style="left:1599px;width:32px;background:linear-gradient(#e3a197,#d4705f 45%,#c23d2b 50%,#cf5b48);border-color:#5a2a26"></div>
<svg class="a" style="left:1607px;top:146px" width="16" height="12" viewBox="0 0 16 12" ><path d="M3.400,2 L12.600,10 M12.600,2 L3.400,10" stroke="#4a3a3a" stroke-width="3.600"/><path d="M3.400,2 L12.600,10 M12.600,2 L3.400,10" stroke="#fff" stroke-width="2.200"/></svg>
<div class="wbtn" style="left:1565px;width:32px;background:linear-gradient(#c6d8ee,#b4cbe6 45%,#9db9db 50%,#b2cae6)"></div>
<div class="a" style="left:1575.500px;top:148px;width:10px;height:8px;border:2px solid #f4f6fa;outline:1px solid #56657d;box-shadow:inset 0 0 0 1px #56657d"></div>
<div class="wbtn" style="left:1531px;width:32px;background:linear-gradient(#c6d8ee,#b4cbe6 45%,#9db9db 50%,#b2cae6)"></div>
<div class="a" style="left:1541.500px;top:152px;width:10px;height:4px;background:#f4f6fa;border:1px solid #56657d"></div>
<svg class="a" style="left:1083.6px;top:245.2px" width="19" height="13" viewBox="0 0 19 13" ><path d="M.4,6.400 C3,2 6.400,.3 9.400,.3 C12.400,.3 15.800,2 18.400,6.400 C15.800,10.800 12.400,12.500 9.400,12.500 C6.400,12.500 3,10.800 .4,6.400z" fill="#2b2b2b"/><circle cx="9.400" cy="6.400" r="4.100" fill="#fff"/><circle cx="9.400" cy="6.400" r="2.100" fill="#2b2b2b"/></svg>
<svg class="a" style="left:648.2px;top:368.6px" width="18" height="12.4" viewBox="0 0 19 13" ><path d="M.4,6.400 C3,2 6.400,.3 9.400,.3 C12.400,.3 15.800,2 18.400,6.400 C15.800,10.800 12.400,12.500 9.400,12.500 C6.400,12.500 3,10.800 .4,6.400z" fill="#2b2b2b"/><circle cx="9.400" cy="6.400" r="4.100" fill="#fff"/><circle cx="9.400" cy="6.400" r="2.100" fill="#2b2b2b"/></svg>
<svg class="a" style="left:964.6px;top:368.6px" width="18" height="12.4" viewBox="0 0 19 13" ><path d="M.4,6.400 C3,2 6.400,.3 9.400,.3 C12.400,.3 15.800,2 18.400,6.400 C15.800,10.800 12.400,12.500 9.400,12.500 C6.400,12.500 3,10.800 .4,6.400z" fill="#2b2b2b"/><circle cx="9.400" cy="6.400" r="4.100" fill="#fff"/><circle cx="9.400" cy="6.400" r="2.100" fill="#2b2b2b"/></svg>
<svg class="a" style="left:1387px;top:367px" width="16" height="16" viewBox="0 0 16 16" ><path d="M2,2 L14,14 M14,2 L2,14" stroke="#e8262d" stroke-width="1.700"/></svg>
<svg class="a" style="left:1469px;top:858px" width="44" height="44" viewBox="0 0 44 44" ><path d="M12.400,12.400 L31.600,31.600 M31.600,12.400 L12.400,31.600" stroke="#e8414a" stroke-width="5.6" stroke-linecap="round"/></svg>
<svg class="a" style="left:1583px;top:858px" width="44" height="44" viewBox="0 0 44 44" ><path d="M11.400,24.400 L17.400,29.600 L32.600,14.400" fill="none" stroke="#10c18b" stroke-width="4.200" stroke-linecap="round" stroke-linejoin="round"/></svg>
<svg class="a" style="left:1527px;top:858px" width="44" height="44" viewBox="0 0 44 44" ><path d="M12.800,32.200 L13,27 L27.200,10.600 L31.600,14.400 L17.600,31z" fill="#f4f4f4" stroke="#666" stroke-width="1.100" stroke-linejoin="round"/><path d="M15.800,29.200 L30,12.600" stroke="#666" stroke-width="1"/><path d="M12.800,32.200 L13,27.600 L17,31z" fill="#f7a81b" stroke="#666" stroke-width=".8"/><path d="M25.400,12.600 L27.400,10.300 L32,14.200 L30,16.500z" fill="#f7a81b" stroke="#666" stroke-width=".8"/></svg>
<svg class="a" style="left:240px;top:858px" width="44" height="44" viewBox="0 0 44 44" ><path d="M35,8.800 H12.600 V19 M12.600,26.400 V34.200 H23.400" fill="none" stroke="#666" stroke-width="2.400"/><path d="M23.200,13.400 L35.200,7.600 V34.400 L23.200,39.200z" fill="#6a6a6a"/><path d="M3.600,22.600 L9.400,17 V20.400 H19 V24.800 H9.400 V28.200z" fill="#f7a81b"/><circle cx="25.400" cy="25.400" r="1" fill="#f7a81b"/></svg>
<svg class="a" style="left:296px;top:856px" width="44" height="44" viewBox="0 0 44 44" ><circle cx="10" cy="22" r="3" fill="#666"/><circle cx="22.200" cy="22" r="3" fill="#666"/><circle cx="34.500" cy="22" r="3" fill="#666"/></svg>
<div class="a" style="left:296px;top:900px;width:44px;height:5px;overflow:hidden"><span class="t" style="left:2px;top:-3px;font-size:13px;line-height:17px;color:#111">امکانات</span></div>
<span class="t" style="left:1522px;top:7.3px;height:28.0px;line-height:28.0px;font-size:17.5px;color:#e9f3f4;transform-origin:0 50%;transform:scaleX(0.8873);">امکانات/اطلاعات پایه</span>
<span class="t" style="left:1363px;top:7.3px;height:28.0px;line-height:28.0px;font-size:17.5px;color:#e9f3f4;transform-origin:0 50%;transform:scaleX(0.8568);">عملیات مرتبط به کالا</span>
<span class="t" style="left:1265px;top:7.3px;height:28.0px;line-height:28.0px;font-size:17.5px;color:#e9f3f4;transform-origin:0 50%;transform:scaleX(0.8393);">عملیات مالي</span>
<span class="t" style="left:1122px;top:7.3px;height:28.0px;line-height:28.0px;font-size:17.5px;color:#e9f3f4;transform-origin:0 50%;transform:scaleX(0.9123);">تنظیمات مدیریتي</span>
<span class="t" style="left:1020px;top:7.3px;height:28.0px;line-height:28.0px;font-size:17.5px;color:#e9f3f4;transform-origin:0 50%;transform:scaleX(0.8571);">اصلاحـــات</span>
<span class="t" style="left:938px;top:7.3px;height:28.0px;line-height:28.0px;font-size:17.5px;color:#e9f3f4;transform-origin:0 50%;transform:scaleX(0.7819);">گزارشات</span>
<span class="t" style="left:846px;top:7.3px;height:28.0px;line-height:28.0px;font-size:17.5px;color:#e9f3f4;transform-origin:0 50%;transform:scaleX(0.8767);">راهنمائي</span>
<span class="t" style="left:170.5px;top:5.8px;height:30.4px;line-height:30.4px;font-size:19px;color:#333;transform-origin:0 50%;transform:scaleX(0.8776);">جستجو...</span>
<span class="t" style="left:1623px;top:86.7px;height:21.6px;line-height:21.6px;font-size:13.5px;color:#222;transform-origin:0 50%;transform:scaleX(0.9041);">کالا</span>
<span class="t" style="left:1525.5px;top:86.7px;height:21.6px;line-height:21.6px;font-size:13.5px;color:#222;transform-origin:0 50%;transform:scaleX(0.8407);">طرف حساب</span>
<span class="t" style="left:1448px;top:86.7px;height:21.6px;line-height:21.6px;font-size:13.5px;color:#222;transform-origin:0 50%;transform:scaleX(0.9397);">حساب بانکي</span>
<span class="t" style="left:1388px;top:86.7px;height:21.6px;line-height:21.6px;font-size:13.5px;color:#222;transform-origin:0 50%;transform:scaleX(0.8911);">فاکتور</span>
<span class="t" style="left:1305.5px;top:86.7px;height:21.6px;line-height:21.6px;font-size:13.5px;color:#222;transform-origin:0 50%;transform:scaleX(0.8735);">صدور سند</span>
<span class="t" style="left:1232.5px;top:86.7px;height:21.6px;line-height:21.6px;font-size:13.5px;color:#222;transform-origin:0 50%;transform:scaleX(0.8646);">امور مالي</span>
<span class="t" style="left:1153px;top:86.7px;height:21.6px;line-height:21.6px;font-size:13.5px;color:#222;transform-origin:0 50%;transform:scaleX(0.9499);">وصول چک</span>
<span class="t" style="left:1078px;top:86.7px;height:21.6px;line-height:21.6px;font-size:13.5px;color:#222;transform-origin:0 50%;transform:scaleX(0.7842);">گزارشات</span>
<span class="t" style="left:1002px;top:86.7px;height:21.6px;line-height:21.6px;font-size:13.5px;color:#222;transform-origin:0 50%;transform:scaleX(0.9347);">تنظیمات</span>
<span class="t" style="left:56px;top:86.7px;height:21.6px;line-height:21.6px;font-size:13.5px;color:#222;transform-origin:0 50%;transform:scaleX(0.9463);">کلاسیک</span>
<span class="t" style="left:1px;top:86.7px;height:21.6px;line-height:21.6px;font-size:13.5px;color:#222;transform-origin:0 50%;transform:scaleX(0.8987);">پروفایل</span>
<span class="t" style="left:74px;top:190.6px;height:20.8px;line-height:20.8px;font-size:13px;color:#222;transform-origin:0 50%;transform:scaleX(1.1815);">فــــــــــــروش</span>
<span class="t" style="left:1436.6px;top:142.5px;height:20.0px;line-height:20.0px;font-size:12.5px;color:#1a1a28;transform-origin:0 50%;transform:scaleX(0.9166);">فاکتور طلاي ساخته</span>
<span class="t" style="left:1358.5px;top:185.6px;height:20.8px;line-height:20.8px;font-size:13px;color:#1d1d1d;font-weight:700;transform-origin:0 50%;transform:scaleX(0.8205);">خرید</span>
<span class="t" style="left:1261.5px;top:178.2px;height:33.6px;line-height:33.6px;font-size:21px;color:#2a2a2a;font-weight:700;transform-origin:0 50%;transform:scaleX(0.5809);">فروش</span>
<span class="t" style="left:1129px;top:185.6px;height:20.8px;line-height:20.8px;font-size:13px;color:#1d1d1d;font-weight:700;transform-origin:0 50%;transform:scaleX(0.7511);">برگشت از خرید</span>
<span class="t" style="left:991px;top:185.6px;height:20.8px;line-height:20.8px;font-size:13px;color:#1d1d1d;font-weight:700;transform-origin:0 50%;transform:scaleX(0.7227);">برگشت از فروش</span>
<span class="t" style="left:878px;top:185.6px;height:20.8px;line-height:20.8px;font-size:13px;color:#1d1d1d;font-weight:700;transform-origin:0 50%;transform:scaleX(0.7290);">پیش فاکتور</span>
<span class="t" style="left:1323px;top:217.4px;height:19.2px;line-height:19.2px;font-size:12px;color:#1d1d1d;font-weight:700;transform-origin:0 50%;transform:scaleX(0.7822);">نام طرف حساب</span>
<span class="t" style="left:1208.5px;top:217.4px;height:19.2px;line-height:19.2px;font-size:12px;color:#1d1d1d;font-weight:700;transform-origin:0 50%;transform:scaleX(0.7454);">تلفن</span>
<span class="t" style="left:550.5px;top:217.4px;height:19.2px;line-height:19.2px;font-size:12px;color:#1d1d1d;font-weight:700;transform-origin:0 50%;transform:scaleX(0.8598);">تاریخ</span>
<span class="t" style="left:518.5px;top:267.4px;height:19.2px;line-height:19.2px;font-size:12px;color:#1d1d1d;font-weight:700;transform-origin:0 50%;transform:scaleX(0.7093);">شماره فاکتور</span>
<span class="t" style="left:1321.8px;top:240.4px;height:19.2px;line-height:19.2px;font-size:12px;color:#1d1d1d;transform-origin:0 50%;transform:scaleX(0.9649);">سامان محمدي</span>
<span class="t" style="left:476.8px;top:239.8px;height:18.4px;line-height:18.4px;font-size:11.5px;color:#1d1d1d;transform-origin:0 50%;transform:scaleX(0.8981);">۱۴۰۰</span>
<span class="t" style="left:518.5px;top:239.8px;height:18.4px;line-height:18.4px;font-size:11.5px;color:#1d1d1d;transform-origin:0 50%;transform:scaleX(0.9960);">/۱۰</span>
<span class="t" style="left:546.5px;top:239.8px;height:18.4px;line-height:18.4px;font-size:11.5px;color:#1d1d1d;transform-origin:0 50%;transform:scaleX(1.1245);">/۱۸</span>
<span class="t" style="left:477.42px;top:290.9px;height:19.2px;line-height:19.2px;font-size:12px;color:#1d1d1d;transform-origin:0 50%;transform:scaleX(0.8000);">۱</span>
<span class="t" style="left:1368px;top:333.9px;height:23.2px;line-height:23.2px;font-size:14.5px;color:#333;transform-origin:0 50%;transform:scaleX(0.8242);">ردیف</span>
<span class="t" style="left:1302px;top:333.9px;height:23.2px;line-height:23.2px;font-size:14.5px;color:#333;transform-origin:0 50%;transform:scaleX(0.8652);">کد کالا</span>
<span class="t" style="left:1105.5px;top:333.9px;height:23.2px;line-height:23.2px;font-size:14.5px;color:#333;transform-origin:0 50%;transform:scaleX(0.8645);">نام کالا</span>
<span class="t" style="left:919.8px;top:333.9px;height:23.2px;line-height:23.2px;font-size:14.5px;color:#333;transform-origin:0 50%;transform:scaleX(0.9265);">تعداد</span>
<span class="t" style="left:858px;top:333.9px;height:23.2px;line-height:23.2px;font-size:14.5px;color:#333;transform-origin:0 50%;transform:scaleX(0.7909);">وزن</span>
<span class="t" style="left:793px;top:333.9px;height:23.2px;line-height:23.2px;font-size:14.5px;color:#333;transform-origin:0 50%;transform:scaleX(0.8383);">عیار</span>
<span class="t" style="left:687.8px;top:333.9px;height:23.2px;line-height:23.2px;font-size:14.5px;color:#333;transform-origin:0 50%;transform:scaleX(0.9195);">جمع کل</span>
<span class="t" style="left:528px;top:333.9px;height:23.2px;line-height:23.2px;font-size:14.5px;color:#333;transform-origin:0 50%;transform:scaleX(0.8984);">توضیحات</span>
<span class="t" style="left:1373.03px;top:363.0px;height:24.0px;line-height:24.0px;font-size:15px;color:#1d1d1d;transform-origin:0 50%;transform:scaleX(0.8000);">۱</span>
<span class="t" style="left:1292px;top:363.0px;height:24.0px;line-height:24.0px;font-size:15px;color:#1d1d1d;transform-origin:0 50%;transform:scaleX(1.0283);">۰۰۲۰۱۰۰</span>
<span class="t" style="left:988.5px;top:362.5px;height:24.0px;line-height:24.0px;font-size:15px;color:#1d1d1d;transform-origin:0 50%;transform:scaleX(0.9624);">گوشواره طلا ۱۸ عیار زنانه ریسه گالري مدل ۳۰۳۲</span>
<span class="t" style="left:930.02px;top:363.0px;height:24.0px;line-height:24.0px;font-size:15px;color:#1d1d1d;transform-origin:0 50%;transform:scaleX(0.8000);">۱</span>
<span class="t" style="left:848.5px;top:363.0px;height:24.0px;line-height:24.0px;font-size:15px;color:#1d1d1d;transform-origin:0 50%;transform:scaleX(1.0520);">۰/۹۰۰</span>
<span class="t" style="left:799px;top:363.0px;height:24.0px;line-height:24.0px;font-size:15px;color:#1d1d1d;transform-origin:0 50%;transform:scaleX(1.0343);">۷۵۰</span>
<span class="t" style="left:677px;top:363.0px;height:24.0px;line-height:24.0px;font-size:15px;color:#1d1d1d;transform-origin:0 50%;transform:scaleX(1.0529);">۱۳,۰۳۸,۸۰۸.۱۴</span>
<span class="t" style="left:662px;top:641.0px;height:24.0px;line-height:24.0px;font-size:15px;color:#1d1d1d;transform-origin:0 50%;transform:scaleX(1.0475);">۱۳,۰۳۸,۸۰۸.۱۴</span>
<span class="t" style="left:859px;top:641.0px;height:24.0px;line-height:24.0px;font-size:15px;color:#1d1d1d;transform-origin:0 50%;transform:scaleX(1.0059);">۰.۹</span>
<span class="t" style="left:930.52px;top:641.0px;height:24.0px;line-height:24.0px;font-size:15px;color:#1d1d1d;transform-origin:0 50%;transform:scaleX(0.8000);">۱</span>
<span class="t" style="left:389px;top:186.2px;height:25.6px;line-height:25.6px;font-size:16px;color:#f2702a;font-weight:700;transform-origin:0 50%;transform:scaleX(0.7396);">تابلو طلا</span>
<span class="t" style="left:290.5px;top:219.0px;height:20.0px;line-height:20.0px;font-size:12.5px;color:#f2702a;font-weight:700;transform-origin:0 50%;transform:scaleX(0.7626);">قیمت رسمي بانک مرکزي</span>
<span class="t" style="left:410.5px;top:248.4px;height:19.2px;line-height:19.2px;font-size:12px;color:#1d1d1d;font-weight:700;transform-origin:0 50%;transform:scaleX(0.7828);">مظنه</span>
<span class="t" style="left:266.5px;top:247.9px;height:19.2px;line-height:19.2px;font-size:12px;color:#1d1d1d;font-weight:700;transform-origin:0 50%;transform:scaleX(0.8734);">۵۴.۸۱۰.۰۰۰</span>
<span class="t" style="left:397px;top:276.4px;height:19.2px;line-height:19.2px;font-size:12px;color:#1d1d1d;transform-origin:0 50%;transform:scaleX(0.8977);">طلاي ۱۸</span>
<span class="t" style="left:266.5px;top:275.9px;height:19.2px;line-height:19.2px;font-size:12px;color:#1d1d1d;font-weight:700;transform-origin:0 50%;transform:scaleX(0.8504);">۱۲.۶۵۴.۰۰۰</span>
<span class="t" style="left:394px;top:307.4px;height:19.2px;line-height:19.2px;font-size:12px;color:#1d1d1d;transform-origin:0 50%;transform:scaleX(0.9686);">طلاي ۲۴</span>
<span class="t" style="left:266.5px;top:306.9px;height:19.2px;line-height:19.2px;font-size:12px;color:#1d1d1d;font-weight:700;transform-origin:0 50%;transform:scaleX(0.8504);">۱۶.۸۷۲.۰۰۰</span>
<span class="t" style="left:388.5px;top:339.4px;height:19.2px;line-height:19.2px;font-size:12px;color:#1d1d1d;transform-origin:0 50%;transform:scaleX(0.9532);">طلاي ۷۴۰</span>
<span class="t" style="left:266.32px;top:338.9px;height:19.2px;line-height:19.2px;font-size:12px;color:#1d1d1d;font-weight:700;transform-origin:0 50%;transform:scaleX(0.8000);">۰</span>
<span class="t" style="left:388.5px;top:371.4px;height:19.2px;line-height:19.2px;font-size:12px;color:#1d1d1d;transform-origin:0 50%;transform:scaleX(0.9725);">اونس طلا</span>
<span class="t" style="left:266.5px;top:370.9px;height:19.2px;line-height:19.2px;font-size:12px;color:#1d1d1d;font-weight:700;transform-origin:0 50%;transform:scaleX(0.9185);">۱.۷۹۶.۶۳</span>
<span class="t" style="left:370.5px;top:415.9px;height:19.2px;line-height:19.2px;font-size:12px;color:#1d1d1d;font-weight:700;transform-origin:0 50%;transform:scaleX(0.7826);">سکه تمام بهار</span>
<span class="t" style="left:266.5px;top:415.4px;height:19.2px;line-height:19.2px;font-size:12px;color:#1d1d1d;font-weight:700;transform-origin:0 50%;transform:scaleX(0.8334);">۱۲۴.۹۵۰.۰۰۰</span>
<span class="t" style="left:395px;top:444.4px;height:19.2px;line-height:19.2px;font-size:12px;color:#1d1d1d;transform-origin:0 50%;transform:scaleX(0.9660);">نیم سکه</span>
<span class="t" style="left:266.5px;top:443.9px;height:19.2px;line-height:19.2px;font-size:12px;color:#1d1d1d;font-weight:700;transform-origin:0 50%;transform:scaleX(0.8734);">۶۶.۷۰۰.۰۰۰</span>
<span class="t" style="left:394px;top:475.4px;height:19.2px;line-height:19.2px;font-size:12px;color:#1d1d1d;transform-origin:0 50%;transform:scaleX(0.9766);">ربع سکه</span>
<span class="t" style="left:266.5px;top:474.9px;height:19.2px;line-height:19.2px;font-size:12px;color:#1d1d1d;font-weight:700;transform-origin:0 50%;transform:scaleX(0.9040);">۳۷.۳۰۰.۰۰۰</span>
<span class="t" style="left:384.8px;top:506.4px;height:19.2px;line-height:19.2px;font-size:12px;color:#1d1d1d;transform-origin:0 50%;transform:scaleX(0.9091);">سکه گرمي</span>
<span class="t" style="left:266.5px;top:505.9px;height:19.2px;line-height:19.2px;font-size:12px;color:#1d1d1d;font-weight:700;transform-origin:0 50%;transform:scaleX(0.8274);">۲۲.۹۰۰.۰۰۰</span>
<span class="t" style="left:381.5px;top:538.4px;height:19.2px;line-height:19.2px;font-size:12px;color:#1d1d1d;transform-origin:0 50%;transform:scaleX(0.9503);">سکه امامي</span>
<span class="t" style="left:266.5px;top:537.9px;height:19.2px;line-height:19.2px;font-size:12px;color:#1d1d1d;font-weight:700;transform-origin:0 50%;transform:scaleX(0.8610);">۱۲۸.۸۶۰.۰۰۰</span>
<span class="t" style="left:386px;top:581.4px;height:19.2px;line-height:19.2px;font-size:12px;color:#1d1d1d;font-weight:700;transform-origin:0 50%;transform:scaleX(0.8120);">دلار آمریکا</span>
<span class="t" style="left:266.5px;top:580.9px;height:19.2px;line-height:19.2px;font-size:12px;color:#1d1d1d;font-weight:700;transform-origin:0 50%;transform:scaleX(0.8460);">۲۶۹.۹۰۰</span>
<span class="t" style="left:416px;top:608.4px;height:19.2px;line-height:19.2px;font-size:12px;color:#1d1d1d;transform-origin:0 50%;transform:scaleX(0.8987);">یورو</span>
<span class="t" style="left:266.5px;top:607.9px;height:19.2px;line-height:19.2px;font-size:12px;color:#1d1d1d;font-weight:700;transform-origin:0 50%;transform:scaleX(0.9306);">۳۲۴.۵۲۰</span>
<span class="t" style="left:416px;top:639.4px;height:19.2px;line-height:19.2px;font-size:12px;color:#1d1d1d;transform-origin:0 50%;transform:scaleX(0.9902);">پوند</span>
<span class="t" style="left:266.5px;top:638.9px;height:19.2px;line-height:19.2px;font-size:12px;color:#1d1d1d;font-weight:700;transform-origin:0 50%;transform:scaleX(0.8946);">۳۹۰.۰۶۰</span>
<span class="t" style="left:376.8px;top:667.9px;height:19.2px;line-height:19.2px;font-size:12px;color:#1d1d1d;transform-origin:0 50%;transform:scaleX(0.9291);">درهم امارات</span>
<span class="t" style="left:266.5px;top:667.4px;height:19.2px;line-height:19.2px;font-size:12px;color:#1d1d1d;font-weight:700;transform-origin:0 50%;transform:scaleX(0.9307);">۷۸.۶۰۰</span>
<span class="t" style="left:398px;top:695.4px;height:19.2px;line-height:19.2px;font-size:12px;color:#1d1d1d;transform-origin:0 50%;transform:scaleX(0.8611);">لیر ترکیه</span>
<span class="t" style="left:266.32px;top:694.9px;height:19.2px;line-height:19.2px;font-size:12px;color:#1d1d1d;font-weight:700;transform-origin:0 50%;transform:scaleX(0.8000);">۰</span>
<span class="t" style="left:381.5px;top:722.4px;height:19.2px;line-height:19.2px;font-size:12px;color:#1d1d1d;transform-origin:0 50%;transform:scaleX(0.9034);">دلار استرالیا</span>
<span class="t" style="left:266.32px;top:721.9px;height:19.2px;line-height:19.2px;font-size:12px;color:#1d1d1d;font-weight:700;transform-origin:0 50%;transform:scaleX(0.8000);">۰</span>
<span class="t" style="left:390px;top:750.4px;height:19.2px;line-height:19.2px;font-size:12px;color:#1d1d1d;transform-origin:0 50%;transform:scaleX(0.9707);">دلار کانادا</span>
<span class="t" style="left:266.32px;top:749.9px;height:19.2px;line-height:19.2px;font-size:12px;color:#1d1d1d;font-weight:700;transform-origin:0 50%;transform:scaleX(0.8000);">۰</span>
<span class="t" style="left:722px;top:693.5px;height:20.0px;line-height:20.0px;font-size:12.5px;color:#1d1d1d;font-weight:700;transform-origin:0 50%;transform:scaleX(0.7945);">جمع کل</span>
<span class="t" style="left:694px;top:725.5px;height:20.0px;line-height:20.0px;font-size:12.5px;color:#1d1d1d;font-weight:700;transform-origin:0 50%;transform:scaleX(0.7907);">جمع تخفیفات</span>
<span class="t" style="left:654px;top:757.0px;height:20.0px;line-height:20.0px;font-size:12.5px;color:#1d1d1d;font-weight:700;transform-origin:0 50%;transform:scaleX(0.8189);">مالیات و عوارض (۹%)</span>
<span class="t" style="left:676.4px;top:806.2px;height:25.6px;line-height:25.6px;font-size:16px;color:#1d1d1d;font-weight:700;transform-origin:0 50%;transform:scaleX(0.8294);">قابل پرداخت</span>
<span class="t" style="left:488px;top:692.7px;height:21.6px;line-height:21.6px;font-size:13.5px;color:#1d1d1d;font-weight:700;transform-origin:0 50%;transform:scaleX(0.9357);">۱۳,۰۳۸,۸۰۸</span>
<span class="t" style="left:487.45px;top:725.2px;height:21.6px;line-height:21.6px;font-size:13.5px;color:#1d1d1d;font-weight:700;transform-origin:0 50%;transform:scaleX(0.8000);">۰</span>
<span class="t" style="left:488px;top:755.2px;height:21.6px;line-height:21.6px;font-size:13.5px;color:#1d1d1d;font-weight:700;transform-origin:0 50%;transform:scaleX(0.8851);">۱,۱۷۳,۴۹۳</span>
<span class="t" style="left:488px;top:807.8px;height:22.4px;line-height:22.4px;font-size:14px;color:#1d1d1d;font-weight:700;transform-origin:0 50%;transform:scaleX(0.8497);">۱۴,۲۱۲,۳۰۱</span>
<span class="t" style="left:946.4px;top:683.9px;height:19.2px;line-height:19.2px;font-size:12px;color:#1d1d1d;font-weight:700;transform-origin:0 50%;transform:scaleX(0.8401);">مانده حساب ریالي</span>
<span class="t" style="left:797.92px;top:706.4px;height:19.2px;line-height:19.2px;font-size:12px;color:#1d1d1d;transform-origin:0 50%;transform:scaleX(0.8000);">۰</span>
<span class="t" style="left:1353.4px;top:688.9px;height:19.2px;line-height:19.2px;font-size:12px;color:#1d1d1d;font-weight:700;transform-origin:0 50%;transform:scaleX(0.8781);">توضیحات</span>
<span class="t" style="left:1498.8px;top:790.5px;height:20.0px;line-height:20.0px;font-size:12.5px;color:#1d1d1d;font-weight:700;transform-origin:0 50%;transform:scaleX(0.7614);">گزارشات</span>
<span class="t" style="left:1499px;top:192.0px;height:24.0px;line-height:24.0px;font-size:15px;color:#1d1d1d;font-weight:700;transform-origin:0 50%;transform:scaleX(0.8235);">طلاي ساخته</span>
<span class="t" style="left:1526px;top:233.8px;height:22.4px;line-height:22.4px;font-size:14px;color:#1d1d1d;font-weight:700;transform-origin:0 50%;transform:scaleX(0.7711);">جواهرات</span>
<span class="t" style="left:1530px;top:274.8px;height:22.4px;line-height:22.4px;font-size:14px;color:#1d1d1d;font-weight:700;transform-origin:0 50%;transform:scaleX(0.8164);">سنگ ها</span>
<span class="t" style="left:1511.8px;top:316.3px;height:22.4px;line-height:22.4px;font-size:14px;color:#1d1d1d;font-weight:700;transform-origin:0 50%;transform:scaleX(0.6801);">متفرقه سالم</span>
<span class="t" style="left:1521.8px;top:357.8px;height:22.4px;line-height:22.4px;font-size:14px;color:#1d1d1d;font-weight:700;transform-origin:0 50%;transform:scaleX(0.7739);">طلاي خام</span>
<span class="t" style="left:1534px;top:397.8px;height:22.4px;line-height:22.4px;font-size:14px;color:#1d1d1d;font-weight:700;transform-origin:0 50%;transform:scaleX(0.7916);">سکه ها</span>
<span class="t" style="left:1549px;top:439.8px;height:22.4px;line-height:22.4px;font-size:14px;color:#1d1d1d;font-weight:700;transform-origin:0 50%;transform:scaleX(0.7273);">سایر</span>
<span class="t" style="left:1501px;top:480.8px;height:22.4px;line-height:22.4px;font-size:14px;color:#1d1d1d;font-weight:700;transform-origin:0 50%;transform:scaleX(0.7930);">حساب طلایي</span>
<span class="t" style="left:1456.7px;top:520.8px;height:22.4px;line-height:22.4px;font-size:14px;color:#1d1d1d;font-weight:700;transform-origin:0 50%;transform:scaleX(0.7970);">تسویه ، حساب طلایي</span>
<span class="t" style="left:1482px;top:589.8px;height:22.4px;line-height:22.4px;font-size:14px;color:#9a9a9a;font-weight:700;transform-origin:0 50%;transform:scaleX(0.7800);">تعمیرات و آبکاري</span>
<span class="t" style="left:1475px;top:638.8px;height:22.4px;line-height:22.4px;font-size:14px;color:#9a9a9a;font-weight:700;transform-origin:0 50%;transform:scaleX(0.7907);">آب کردن و ریگیري</span>
<span class="t" style="left:6px;top:950.2px;height:25.6px;line-height:25.6px;font-size:16px;color:#f2fbfb;transform-origin:0 50%;transform:scaleX(1.0044);">۱۰:۰۳</span>
<span class="t" style="left:56.5px;top:950.2px;height:25.6px;line-height:25.6px;font-size:16px;color:#f2fbfb;transform-origin:0 50%;transform:scaleX(1.0113);">شنبه۱۸ دي, ۱۴۰۰</span>
<span class="t" style="left:193.5px;top:950.2px;height:25.6px;line-height:25.6px;font-size:16px;color:#f2fbfb;transform-origin:0 50%;transform:scaleX(0.9966);">طلا و جواهر</span>
<span class="t" style="left:289px;top:950.2px;height:25.6px;line-height:25.6px;font-size:16px;color:#f2fbfb;transform-origin:0 50%;transform:scaleX(0.9854);">۰۲۱-۲۳۰۶۷</span>
<span class="t" style="left:372px;top:950.2px;height:25.6px;line-height:25.6px;font-size:16px;color:#f2fbfb;transform-origin:0 50%;transform:scaleX(1.0211);">پشتیباني:</span>
<span class="t" style="left:439px;top:950.2px;height:25.6px;line-height:25.6px;font-size:16px;color:#f2fbfb;transform-origin:0 50%;transform:scaleX(1.0114);">۰۲۱-۲۲۲۲۱۱۴۲</span>
<span class="t" style="left:552px;top:950.2px;height:25.6px;line-height:25.6px;font-size:16px;color:#f2fbfb;transform-origin:0 50%;transform:scaleX(0.8716);">فروش:</span>
</body></html>
